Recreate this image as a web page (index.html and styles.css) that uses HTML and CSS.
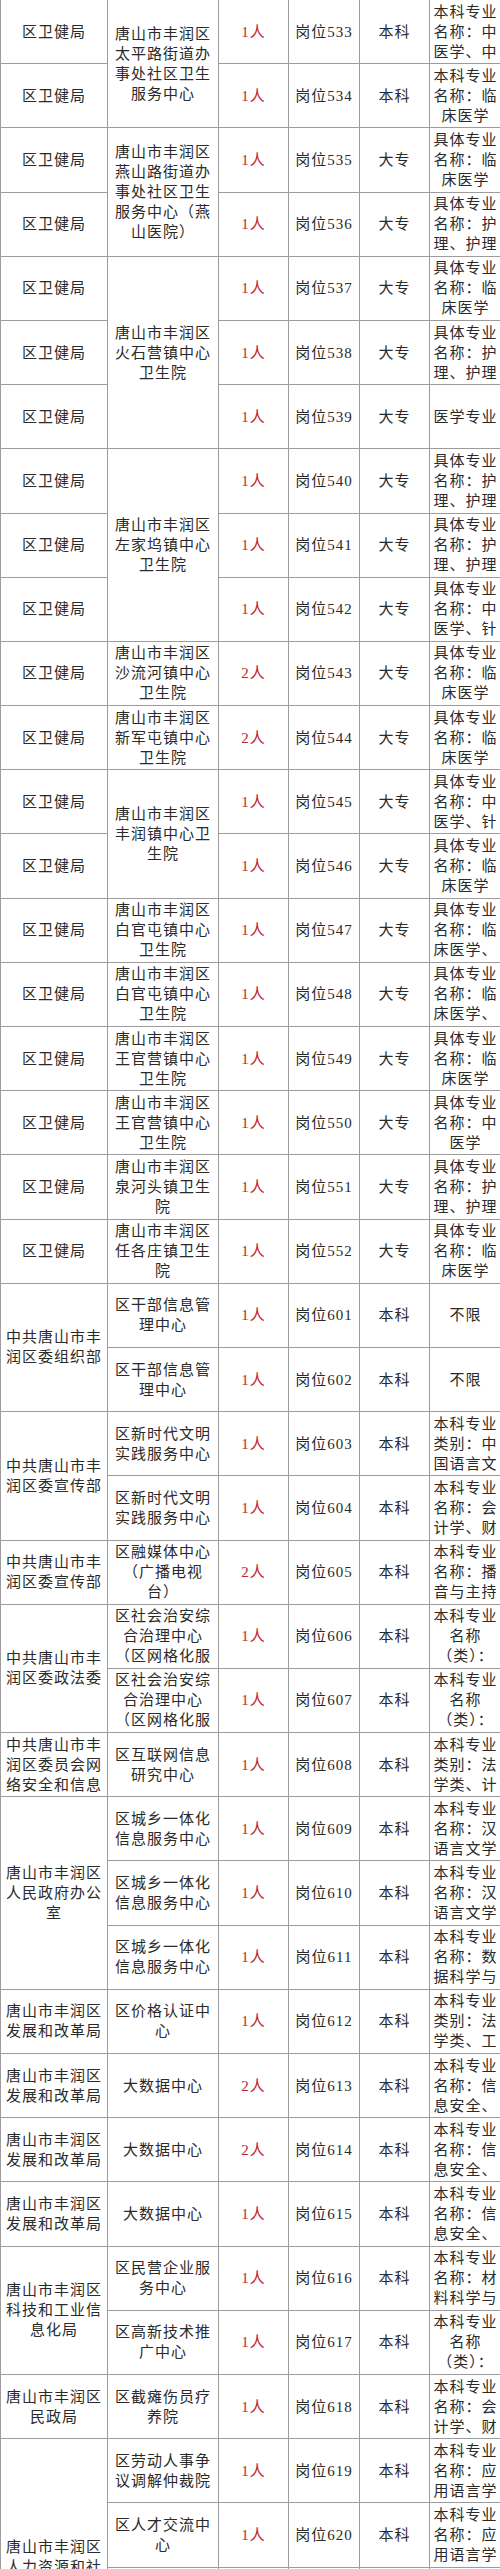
FILE: index.html
```html
<!DOCTYPE html>
<html lang="zh-CN">
<head>
<meta charset="utf-8">
<title>岗位表</title>
<link rel="stylesheet" href="styles.css">
</head>
<body>
<div class="sheet">
  <div class="grid">
    <div class="c dept">区卫健局</div><div class="c unit r2">唐山市丰润区太平路街道办事处社区卫生服务中心</div><div class="c num">1人</div><div class="c post">岗位533</div><div class="c edu">本科</div><div class="c major">本科专业名称：中医学、中</div>
    <div class="c dept">区卫健局</div><div class="c num">1人</div><div class="c post">岗位534</div><div class="c edu">本科</div><div class="c major">本科专业名称：临床医学</div>
    <div class="c dept">区卫健局</div><div class="c unit r2">唐山市丰润区燕山路街道办事处社区卫生服务中心（燕山医院）</div><div class="c num">1人</div><div class="c post">岗位535</div><div class="c edu">大专</div><div class="c major">具体专业名称：临床医学</div>
    <div class="c dept">区卫健局</div><div class="c num">1人</div><div class="c post">岗位536</div><div class="c edu">大专</div><div class="c major">具体专业名称：护理、护理</div>
    <div class="c dept">区卫健局</div><div class="c unit r3">唐山市丰润区火石营镇中心卫生院</div><div class="c num">1人</div><div class="c post">岗位537</div><div class="c edu">大专</div><div class="c major">具体专业名称：临床医学</div>
    <div class="c dept">区卫健局</div><div class="c num">1人</div><div class="c post">岗位538</div><div class="c edu">大专</div><div class="c major">具体专业名称：护理、护理</div>
    <div class="c dept">区卫健局</div><div class="c num">1人</div><div class="c post">岗位539</div><div class="c edu">大专</div><div class="c major">医学专业</div>
    <div class="c dept">区卫健局</div><div class="c unit r3">唐山市丰润区左家坞镇中心卫生院</div><div class="c num">1人</div><div class="c post">岗位540</div><div class="c edu">大专</div><div class="c major">具体专业名称：护理、护理</div>
    <div class="c dept">区卫健局</div><div class="c num">1人</div><div class="c post">岗位541</div><div class="c edu">大专</div><div class="c major">具体专业名称：护理、护理</div>
    <div class="c dept">区卫健局</div><div class="c num">1人</div><div class="c post">岗位542</div><div class="c edu">大专</div><div class="c major">具体专业名称：中医学、针</div>
    <div class="c dept">区卫健局</div><div class="c unit">唐山市丰润区沙流河镇中心卫生院</div><div class="c num">2人</div><div class="c post">岗位543</div><div class="c edu">大专</div><div class="c major">具体专业名称：临床医学</div>
    <div class="c dept">区卫健局</div><div class="c unit">唐山市丰润区新军屯镇中心卫生院</div><div class="c num">2人</div><div class="c post">岗位544</div><div class="c edu">大专</div><div class="c major">具体专业名称：临床医学</div>
    <div class="c dept">区卫健局</div><div class="c unit r2">唐山市丰润区丰润镇中心卫生院</div><div class="c num">1人</div><div class="c post">岗位545</div><div class="c edu">大专</div><div class="c major">具体专业名称：中医学、针</div>
    <div class="c dept">区卫健局</div><div class="c num">1人</div><div class="c post">岗位546</div><div class="c edu">大专</div><div class="c major">具体专业名称：临床医学</div>
    <div class="c dept">区卫健局</div><div class="c unit">唐山市丰润区白官屯镇中心卫生院</div><div class="c num">1人</div><div class="c post">岗位547</div><div class="c edu">大专</div><div class="c major">具体专业名称：临床医学、</div>
    <div class="c dept">区卫健局</div><div class="c unit">唐山市丰润区白官屯镇中心卫生院</div><div class="c num">1人</div><div class="c post">岗位548</div><div class="c edu">大专</div><div class="c major">具体专业名称：临床医学、</div>
    <div class="c dept">区卫健局</div><div class="c unit">唐山市丰润区王官营镇中心卫生院</div><div class="c num">1人</div><div class="c post">岗位549</div><div class="c edu">大专</div><div class="c major">具体专业名称：临床医学</div>
    <div class="c dept">区卫健局</div><div class="c unit">唐山市丰润区王官营镇中心卫生院</div><div class="c num">1人</div><div class="c post">岗位550</div><div class="c edu">大专</div><div class="c major">具体专业名称：中医学</div>
    <div class="c dept">区卫健局</div><div class="c unit">唐山市丰润区泉河头镇卫生院</div><div class="c num">1人</div><div class="c post">岗位551</div><div class="c edu">大专</div><div class="c major">具体专业名称：护理、护理</div>
    <div class="c dept">区卫健局</div><div class="c unit">唐山市丰润区任各庄镇卫生院</div><div class="c num">1人</div><div class="c post">岗位552</div><div class="c edu">大专</div><div class="c major">具体专业名称：临床医学</div>

    <div class="c dept r2">中共唐山市丰润区委组织部</div><div class="c unit">区干部信息管理中心</div><div class="c num">1人</div><div class="c post">岗位601</div><div class="c edu">本科</div><div class="c major">不限</div>
    <div class="c unit">区干部信息管理中心</div><div class="c num">1人</div><div class="c post">岗位602</div><div class="c edu">本科</div><div class="c major">不限</div>
    <div class="c dept r2">中共唐山市丰润区委宣传部</div><div class="c unit">区新时代文明实践服务中心</div><div class="c num">1人</div><div class="c post">岗位603</div><div class="c edu">本科</div><div class="c major">本科专业类别：中国语言文</div>
    <div class="c unit">区新时代文明实践服务中心</div><div class="c num">1人</div><div class="c post">岗位604</div><div class="c edu">本科</div><div class="c major">本科专业名称：会计学、财</div>
    <div class="c dept">中共唐山市丰润区委宣传部</div><div class="c unit">区融媒体中心（广播电视台）</div><div class="c num">2人</div><div class="c post">岗位605</div><div class="c edu">本科</div><div class="c major">本科专业名称：播音与主持</div>
    <div class="c dept r2">中共唐山市丰润区委政法委</div><div class="c unit">区社会治安综合治理中心（区网格化服</div><div class="c num">1人</div><div class="c post">岗位606</div><div class="c edu">本科</div><div class="c major">本科专业名称（类）：</div>
    <div class="c unit">区社会治安综合治理中心（区网格化服</div><div class="c num">1人</div><div class="c post">岗位607</div><div class="c edu">本科</div><div class="c major">本科专业名称（类）：</div>
    <div class="c dept">中共唐山市丰润区委员会网络安全和信息</div><div class="c unit">区互联网信息研究中心</div><div class="c num">1人</div><div class="c post">岗位608</div><div class="c edu">本科</div><div class="c major">本科专业类别：法学类、计</div>
    <div class="c dept r3">唐山市丰润区人民政府办公室</div><div class="c unit">区城乡一体化信息服务中心</div><div class="c num">1人</div><div class="c post">岗位609</div><div class="c edu">本科</div><div class="c major">本科专业名称：汉语言文学</div>
    <div class="c unit">区城乡一体化信息服务中心</div><div class="c num">1人</div><div class="c post">岗位610</div><div class="c edu">本科</div><div class="c major">本科专业名称：汉语言文学</div>
    <div class="c unit">区城乡一体化信息服务中心</div><div class="c num">1人</div><div class="c post">岗位611</div><div class="c edu">本科</div><div class="c major">本科专业名称：数据科学与</div>
    <div class="c dept">唐山市丰润区发展和改革局</div><div class="c unit">区价格认证中心</div><div class="c num">1人</div><div class="c post">岗位612</div><div class="c edu">本科</div><div class="c major">本科专业类别：法学类、工</div>
    <div class="c dept">唐山市丰润区发展和改革局</div><div class="c unit">大数据中心</div><div class="c num">2人</div><div class="c post">岗位613</div><div class="c edu">本科</div><div class="c major">本科专业名称：信息安全、</div>
    <div class="c dept">唐山市丰润区发展和改革局</div><div class="c unit">大数据中心</div><div class="c num">2人</div><div class="c post">岗位614</div><div class="c edu">本科</div><div class="c major">本科专业名称：信息安全、</div>
    <div class="c dept">唐山市丰润区发展和改革局</div><div class="c unit">大数据中心</div><div class="c num">1人</div><div class="c post">岗位615</div><div class="c edu">本科</div><div class="c major">本科专业名称：信息安全、</div>
    <div class="c dept r2">唐山市丰润区科技和工业信息化局</div><div class="c unit">区民营企业服务中心</div><div class="c num">1人</div><div class="c post">岗位616</div><div class="c edu">本科</div><div class="c major">本科专业名称：材料科学与</div>
    <div class="c unit">区高新技术推广中心</div><div class="c num">1人</div><div class="c post">岗位617</div><div class="c edu">本科</div><div class="c major">本科专业名称（类）：</div>
    <div class="c dept">唐山市丰润区民政局</div><div class="c unit">区截瘫伤员疗养院</div><div class="c num">1人</div><div class="c post">岗位618</div><div class="c edu">本科</div><div class="c major">本科专业名称：会计学、财</div>
    <div class="c dept r4">唐山市丰润区人力资源和社会保障局</div><div class="c unit">区劳动人事争议调解仲裁院</div><div class="c num">1人</div><div class="c post">岗位619</div><div class="c edu">本科</div><div class="c major">本科专业名称：应用语言学</div>
    <div class="c unit">区人才交流中心</div><div class="c num">1人</div><div class="c post">岗位620</div><div class="c edu">本科</div><div class="c major">本科专业名称：应用语言学</div>
    <div class="c unit"></div><div class="c num"></div><div class="c post"></div><div class="c edu"></div><div class="c major"></div>
    <div class="c unit"></div><div class="c num"></div><div class="c post"></div><div class="c edu"></div><div class="c major"></div>
  </div>
</div>
</body>
</html>
```
FILE: styles.css
```css
html, body {
  margin: 0;
  padding: 0;
  background: #ffffff;
}

.sheet {
  width: 500px;
  height: 2569px;
  overflow: hidden;
}

.grid {
  display: grid;
  grid-template-columns: 106px 110px 69px 70px 69px 80px;
  grid-auto-rows: 63.2px;
  gap: 1px;
  padding-left: 1px;
  background: #9c9c9c;
  width: 520px;
  font-family: "Liberation Serif", "Noto Sans CJK SC", serif;
  font-size: 15px;
  letter-spacing: 1px;
  line-height: 20px;
  color: #2a2a2a;
}

.c {
  background: #ffffff;
  display: flex;
  align-items: center;
  justify-content: center;
  text-align: center;
  overflow: hidden;
  padding: 0 2px;
  box-sizing: border-box;
}

.unit {
  padding: 0 3px;
}

.num {
  color: #c0262c;
}

.major {
  padding: 0 2px;
  width: 71px;
}

.r2 { grid-row: span 2; }
.r3 { grid-row: span 3; }
.r4 { grid-row: span 4; }
```
